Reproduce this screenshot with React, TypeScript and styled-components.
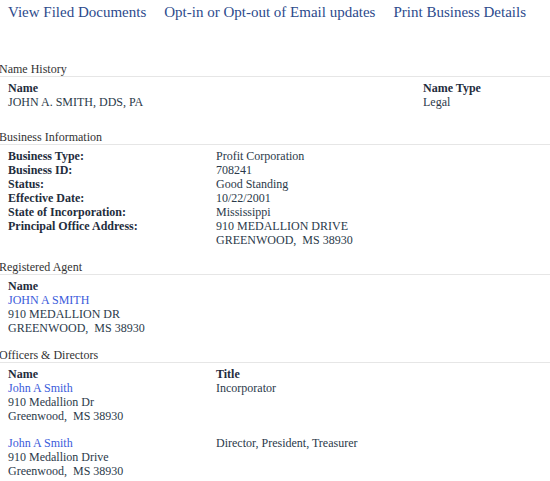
import React from "react";
import styled, { createGlobalStyle } from "styled-components";

const GlobalStyle = createGlobalStyle`
  body {
    margin: 0;
    background: #ffffff;
    font-family: "Liberation Serif", "Times New Roman", serif;
    color: #2b3a4a;
  }
`;

type Row = { label: string; value: string[] };

const businessRows: Row[] = [
  { label: "Business Type:", value: ["Profit Corporation"] },
  { label: "Business ID:", value: ["708241"] },
  { label: "Status:", value: ["Good Standing"] },
  { label: "Effective Date:", value: ["10/22/2001"] },
  { label: "State of Incorporation:", value: ["Mississippi"] },
  {
    label: "Principal Office Address:",
    value: ["910 MEDALLION DRIVE", "GREENWOOD,\u00a0 MS 38930"],
  },
];

const officers = [
  {
    name: "John A Smith",
    address: ["910 Medallion Dr", "Greenwood,\u00a0 MS 38930"],
    title: "Incorporator",
  },
  {
    name: "John A Smith",
    address: ["910 Medallion Drive", "Greenwood,\u00a0 MS 38930"],
    title: "Director, President, Treasurer",
  },
];

export default function App() {
  return (
    <>
      <GlobalStyle />
      <StyledPage>
        <StyledNav>
          <StyledNavLink href="#">View Filed Documents</StyledNavLink>
          <StyledNavLink href="#">Opt-in or Opt-out of Email updates</StyledNavLink>
          <StyledNavLink href="#">Print Business Details</StyledNavLink>
        </StyledNav>

        <StyledSection $gap={21}>
          <StyledHeading>Name History</StyledHeading>
          <StyledGrid $first={415}>
            <StyledHead>Name</StyledHead>
            <StyledHead>Name Type</StyledHead>
            <div>JOHN A. SMITH, DDS, PA</div>
            <div>Legal</div>
          </StyledGrid>
        </StyledSection>

        <StyledSection $gap={13}>
          <StyledHeading>Business Information</StyledHeading>
          <StyledGrid $first={208}>
            {businessRows.map((row) => (
              <React.Fragment key={row.label}>
                <StyledHead>{row.label}</StyledHead>
                <div>
                  {row.value.map((line) => (
                    <div key={line}>{line}</div>
                  ))}
                </div>
              </React.Fragment>
            ))}
          </StyledGrid>
        </StyledSection>

        <StyledSection $gap={13}>
          <StyledHeading>Registered Agent</StyledHeading>
          <StyledGrid $first={208}>
            <div>
              <StyledHead>Name</StyledHead>
              <StyledLink href="#">JOHN A SMITH</StyledLink>
              <div>910 MEDALLION DR</div>
              <div>GREENWOOD,&nbsp; MS 38930</div>
            </div>
          </StyledGrid>
        </StyledSection>

        <StyledSection $gap={0}>
          <StyledHeading>Officers &amp; Directors</StyledHeading>
          <StyledGrid $first={208}>
            <StyledHead>Name</StyledHead>
            <StyledHead>Title</StyledHead>
          </StyledGrid>
          <StyledOfficers>
            {officers.map((o, i) => (
              <StyledOfficerRow key={i}>
                <div>
                  <StyledLink href="#">{o.name}</StyledLink>
                  {o.address.map((line) => (
                    <div key={line}>{line}</div>
                  ))}
                </div>
                <div>{o.title}</div>
              </StyledOfficerRow>
            ))}
          </StyledOfficers>
        </StyledSection>
      </StyledPage>
    </>
  );
}

const StyledPage = styled.div`
  width: 550px;
  font-size: 12px;
  line-height: 14px;
`;

const StyledNav = styled.nav`
  display: flex;
  gap: 18px;
  padding: 4px 0 0 8px;
  height: 62px;
  box-sizing: border-box;
`;

const StyledNavLink = styled.a`
  font-size: 15px;
  line-height: 17px;
  color: #2c4a8c;
  text-decoration: none;
  white-space: nowrap;
`;

const StyledSection = styled.section<{ $gap: number }>`
  margin-bottom: ${(p) => p.$gap}px;
`;

const StyledHeading = styled.div`
  margin-left: -1px;
  border-bottom: 1px solid #e6e6e6;
  color: #333333;
`;

const StyledGrid = styled.div<{ $first: number }>`
  display: grid;
  grid-template-columns: ${(p) => p.$first}px 1fr;
  padding: 4px 0 0 8px;
`;

const StyledOfficers = styled.div`
  display: flex;
  flex-direction: column;
  gap: 13px;
  padding-left: 8px;
`;

const StyledOfficerRow = styled.div`
  display: grid;
  grid-template-columns: 208px 1fr;
`;

const StyledHead = styled.div`
  font-weight: bold;
  color: #1f2d3d;
`;

const StyledLink = styled.a`
  display: block;
  color: #3b5bdb;
  text-decoration: none;
`;
